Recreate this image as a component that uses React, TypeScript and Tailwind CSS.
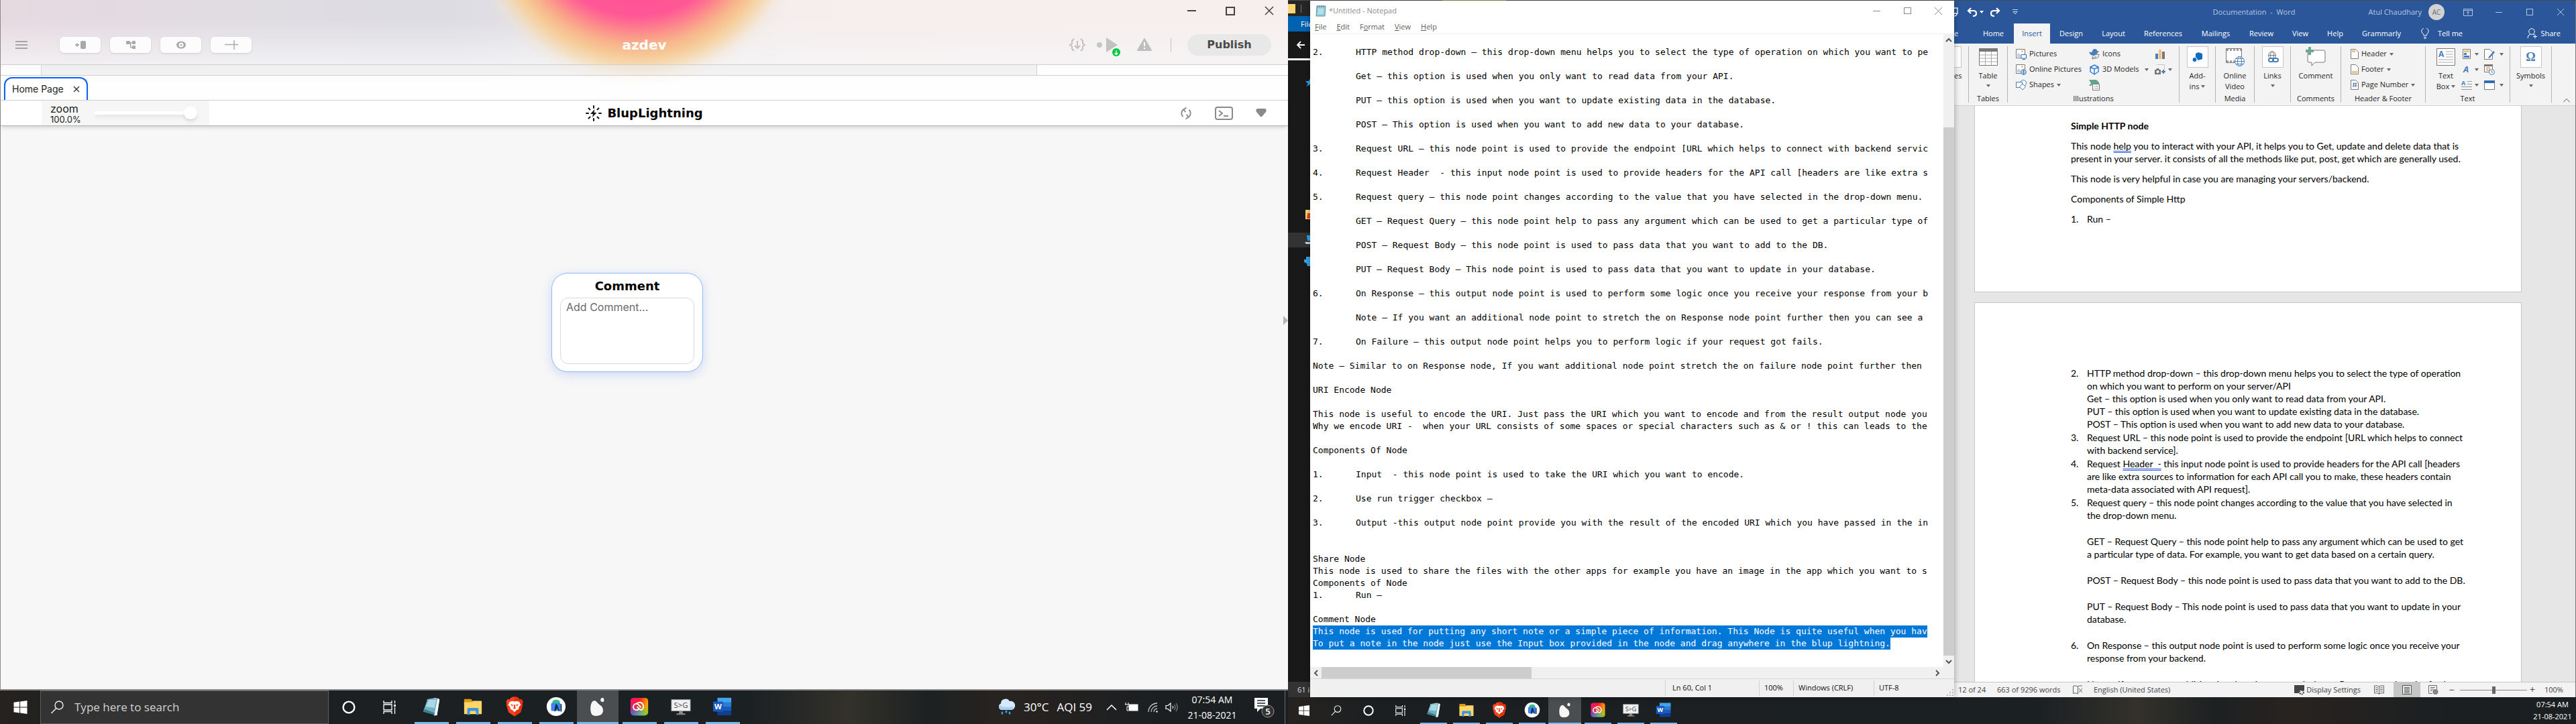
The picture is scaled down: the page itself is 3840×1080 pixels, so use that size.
import React from "react";

type Line = { n?: string; t?: string; indent?: boolean; selected?: boolean };

const notepadLines: Line[] = [
  {},
  { n: "2.", t: "HTTP method drop-down – this drop-down menu helps you to select the type of operation on which you want to pe" },
  {},
  { indent: true, t: "Get – this option is used when you only want to read data from your API." },
  {},
  { indent: true, t: "PUT – this option is used when you want to update existing data in the database." },
  {},
  { indent: true, t: "POST – This option is used when you want to add new data to your database." },
  {},
  { n: "3.", t: "Request URL – this node point is used to provide the endpoint [URL which helps to connect with backend servic" },
  {},
  { n: "4.", t: "Request Header  - this input node point is used to provide headers for the API call [headers are like extra s" },
  {},
  { n: "5.", t: "Request query – this node point changes according to the value that you have selected in the drop-down menu." },
  {},
  { indent: true, t: "GET – Request Query – this node point help to pass any argument which can be used to get a particular type of" },
  {},
  { indent: true, t: "POST – Request Body – this node point is used to pass data that you want to add to the DB." },
  {},
  { indent: true, t: "PUT – Request Body – This node point is used to pass data that you want to update in your database." },
  {},
  { n: "6.", t: "On Response – this output node point is used to perform some logic once you receive your response from your b" },
  {},
  { indent: true, t: "Note – If you want an additional node point to stretch the on Response node point further then you can see a" },
  {},
  { n: "7.", t: "On Failure – this output node point helps you to perform logic if your request got fails." },
  {},
  { t: "Note – Similar to on Response node, If you want additional node point stretch the on failure node point further then" },
  {},
  { t: "URI Encode Node" },
  {},
  { t: "This node is useful to encode the URI. Just pass the URI which you want to encode and from the result output node you" },
  { t: "Why we encode URI -  when your URL consists of some spaces or special characters such as & or ! this can leads to the" },
  {},
  { t: "Components Of Node" },
  {},
  { n: "1.", t: "Input  - this node point is used to take the URI which you want to encode." },
  {},
  { n: "2.", t: "Use run trigger checkbox –" },
  {},
  { n: "3.", t: "Output -this output node point provide you with the result of the encoded URI which you have passed in the in" },
  {},
  {},
  { t: "Share Node" },
  { t: "This node is used to share the files with the other apps for example you have an image in the app which you want to s" },
  { t: "Components of Node" },
  { n: "1.", t: "Run –" },
  {},
  { t: "Comment Node" },
  { selected: true, t: "This node is used for putting any short note or a simple piece of information. This Node is quite useful when you hav" },
  { selected: true, t: "To put a note in the node just use the Input box provided in the node and drag anywhere in the blup lightning." },
];

/* ---------- taskbar icons ---------- */

const WindowsLogo = ({ className }: { className: string }) => (
  <svg viewBox="0 0 20 20" className={className} fill="#fff" aria-hidden="true">
    <path d="M0 2.8 8.6 1.6v8H0zM9.6 1.4 20 0v9.6H9.6zM0 10.5h8.6v7.9L0 17.2zM9.6 10.5H20V20L9.6 18.6z" />
  </svg>
);
const SearchGlyph = ({ className }: { className: string }) => (
  <svg viewBox="0 0 20 20" className={className} fill="none" stroke="#f0f0f0" strokeWidth="1.4" aria-hidden="true">
    <circle cx="12.5" cy="7" r="6" />
    <path d="M8.3 11.4 1 19" />
  </svg>
);
const CortanaRing = ({ className }: { className: string }) => (
  <svg viewBox="0 0 20 20" className={className} fill="none" stroke="#fff" strokeWidth="2.4" aria-hidden="true">
    <circle cx="10" cy="10" r="8.4" />
  </svg>
);
const TaskViewGlyph = ({ className }: { className: string }) => (
  <svg viewBox="0 0 20 20" className={className} fill="none" stroke="#fff" strokeWidth="1.3" aria-hidden="true">
    <path d="M1 0v3.5h12V0M1 20v-3.5h12V20M1 6h12v8H1zM17.5 0v4.500M17.5 10v10" />
    <path d="M16 6h3v3h-3z" fill="#fff" stroke="none" />
  </svg>
);
const NotepadApp = () => (
  <svg viewBox="0 0 32 32" className="h-full w-full" aria-hidden="true">
    <path d="M9 5 22 2l7 2-4 25-4 2z" fill="#dfe9ec" />
    <path d="M10 4 26 3l-5 26-18-5z" fill="#6fb1c1" />
    <path d="M12 5h12l-3 13-14-2z" fill="#a9d8e2" />
    <path d="M3 24l18 5 1-3L5 20z" fill="#3e7f92" />
    <path d="M21 29 26 3l3 2-4 25z" fill="#f3f7f8" />
  </svg>
);
const ExplorerApp = () => (
  <svg viewBox="0 0 32 32" className="h-full w-full" aria-hidden="true">
    <path d="M2 5a1 1 0 0 1 1-1h10l2 3v5H2z" fill="#dc9c10" />
    <path d="M2 9h12l2-2h13a1 1 0 0 1 1 1v20H2z" fill="#ffd667" />
    <path d="M7 28v-8a2 2 0 0 1 2-2h14a2 2 0 0 1 2 2v9h-4v-4a2 2 0 0 0-2-2h-6a2 2 0 0 0-2 2v4H7z" fill="#3e97dc" />
  </svg>
);
const BraveApp = () => (
  <svg viewBox="0 0 32 32" className="h-full w-full" aria-hidden="true">
    <path d="m10 2 3-1.500h6L22 2l2 2.500 3-.3 2.500 4-1 3 .5 2-3.500 12.300L22 27.500 16 31.500l-6-4L6.500 25 3 13.200l.5-2-1-3L5 4.200l3 .3z" fill="#f8441c" />
    <path d="M16 1v30.500l6-4 3.500-2.500L29 13.200l-.5-2 1-3-2.500-4-3 .3L22 2l-3-1.500z" fill="#e8310a" />
    <path d="m16 8 3-.8 4.500 1 2.500 5-3.500 4 .5 2.600-4 2-3 3-3-3-4-2 .5-2.600-3.500-4 2.500-5 4.500-1z" fill="#fff" />
    <path d="m9.500 12 4 1-1 3zM22.500 12l-4 1 1 3zM14.500 13h3l-.5 4 1.500 1.500-2.500 1.500-2.500-1.500L15 17z" fill="#f8441c" />
  </svg>
);
const AndroidStudioApp = () => (
  <svg viewBox="0 0 32 32" className="h-full w-full" aria-hidden="true">
    <circle cx="16" cy="16" r="15" fill="#fff" />
    <path d="M10 9a6 4 0 0 1 12 0v2H10z" fill="#2fc47c" />
    <rect x="8" y="10" width="15" height="13" rx="2" fill="#3f84ee" />
    <path d="m15 13 2-1 5 12-2-1-2.500-5-2.500 5-2 1z" fill="#0b2640" />
    <path d="M23 12h1.800v12H23z" fill="#0b2640" />
  </svg>
);
const BlupApp = () => (
  <svg viewBox="0 0 32 32" className="h-full w-full" fill="#f6f6f6" stroke="#2a2a2a" strokeWidth=".8" aria-hidden="true">
    <path d="M11 6c3 0 5 5 10 8s7 15-4 17S4 27 4 19 7 6 11 6z" />
    <path d="M20 5c0-3 5-5 6-2s1 6-2 6-4-1-4-4z" />
  </svg>
);
const CreativeCloudApp = () => (
  <svg viewBox="0 0 32 32" className="h-full w-full" aria-hidden="true">
    <defs>
      <linearGradient id="cc-a" x1="0" y1="0" x2="1" y2="0.300">
        <stop offset="0" stopColor="#f0147d" />
        <stop offset=".5" stopColor="#f6202a" />
        <stop offset="1" stopColor="#ffae00" />
      </linearGradient>
      <linearGradient id="cc-b" x1="0" y1="0" x2="1" y2="0">
        <stop offset="0" stopColor="#3b62ff" />
        <stop offset=".5" stopColor="#27c7c0" />
        <stop offset="1" stopColor="#7bd11c" />
      </linearGradient>
      <linearGradient id="cc-c" x1="0" y1="0" x2="0" y2="1">
        <stop offset=".4" stopColor="#fff" stopOpacity="0" />
        <stop offset="1" stopColor="#fff" />
      </linearGradient>
      <mask id="cc-m"><rect width="32" height="32" fill="url(#cc-c)" /></mask>
    </defs>
    <rect x="2" y="2" width="28" height="28" rx="5" fill="url(#cc-a)" />
    <rect x="2" y="2" width="28" height="28" rx="5" fill="url(#cc-b)" mask="url(#cc-m)" />
    <g fill="none" stroke="#fff" strokeWidth="2">
      <path d="M16 19c-1.500 2-3 2.500-4.500 2.500a5 5 0 1 1 0-10c3 0 5 3.500 7 6" />
      <path d="M11 12a6.500 6.500 0 1 1 8.500 9.500c-3 0-5-3-7-5.500" />
    </g>
  </svg>
);
const ScreenToGifApp = () => (
  <svg viewBox="0 0 32 32" className="h-full w-full" aria-hidden="true">
    <path d="M13 22h6v5h4v2H9v-2h4z" fill="#8a8a8a" />
    <rect x="1" y="5" width="30" height="18" fill="#f1f1f1" stroke="#999" />
    <text x="16" y="18" textAnchor="middle" fontFamily="'Open Sans', sans-serif" fontSize="12" fill="#444">S&gt;G</text>
  </svg>
);
const WordApp = () => (
  <svg viewBox="0 0 32 32" className="h-full w-full" aria-hidden="true">
    <path d="M8 2h22v8H8z" fill="#41a5ee" />
    <path d="M8 9h22v7H8z" fill="#2b7cd3" />
    <path d="M8 16h22v7H8z" fill="#185abd" />
    <path d="M8 23h22v7H8z" fill="#103f91" />
    <rect x="1" y="8" width="16" height="16" rx="1" fill="#185abd" />
    <text x="9" y="20.500" textAnchor="middle" fontFamily="'Open Sans', sans-serif" fontWeight="700" fontSize="12" fill="#fff">W</text>
  </svg>
);

const apps = [
  { name: "Notepad", Icon: NotepadApp },
  { name: "File Explorer", Icon: ExplorerApp },
  { name: "Brave", Icon: BraveApp },
  { name: "Android Studio", Icon: AndroidStudioApp },
  { name: "Blup", Icon: BlupApp },
  { name: "Creative Cloud", Icon: CreativeCloudApp },
  { name: "ScreenToGif", Icon: ScreenToGifApp },
  { name: "Word", Icon: WordApp },
];

const taskbarBg =
  "bg-[linear-gradient(90deg,#26231f_0%,#1b1f22_7%,#1b2023_58%,#33312a_66%,#1d2122_72%,#28231f_78%,#1b1f22_90%)]";

/* ---------- Blup window ---------- */

const ToolButton = ({ label, children }: { label: string; children: React.ReactNode }) => (
  <button aria-label={label} className="flex h-6 w-[61px] items-center justify-center rounded-md bg-[#fcfcfc] shadow-sm">
    {children}
  </button>
);

const BlupHeader = () => (
  <header className="flex h-[96px] flex-col">
    <div className="flex h-[38px] shrink-0 items-center justify-end gap-[44px] pr-[21px] pb-[6px]">
      <button aria-label="Minimize" className="flex w-[14px] justify-center"><span className="h-0.5 w-[13px] bg-[#444]" /></button>
      <button aria-label="Maximize" className="h-[13px] w-[14px] border-2 border-[#444]" />
      <button aria-label="Close">
        <svg viewBox="0 0 14 14" className="h-[14px] w-[14px]" stroke="#444" strokeWidth="1.500"><path d="m1 1 12 12M13 1 1 13" /></svg>
      </button>
    </div>
    <div className="grid h-[58px] shrink-0 grid-cols-[1fr_auto_1fr] items-center">
      <div className="flex items-center pl-[22px]">
        <button aria-label="Menu" className="mr-12 flex w-[18px] flex-col gap-[3px]">
          <span className="h-0.5 bg-[#a6a6a6]" />
          <span className="h-0.5 bg-[#a6a6a6]" />
          <span className="h-0.5 bg-[#a6a6a6]" />
        </button>
        <div className="flex gap-[14px]">
          <ToolButton label="Insert panel">
            <svg viewBox="0 0 16 14" className="h-[14px] w-4" fill="#a9a9a9"><rect x="8" y="1" width="8" height="12" rx="2" /><path d="M0 6h2V4.500h2V6h2v2H4v1.500H2V8H0z" /></svg>
          </ToolButton>
          <ToolButton label="Tree">
            <svg viewBox="0 0 16 14" className="h-[14px] w-4" fill="#a9a9a9"><rect x="1" y="1" width="6" height="5" rx="1" /><rect x="10" y="1" width="5" height="5" rx="1" /><rect x="10" y="8" width="5" height="5" rx="1" /><path d="M6 3h2.500v7H11v1.500H7V4.500H6zM8 3h3v1.200H8z" /></svg>
          </ToolButton>
          <ToolButton label="Preview">
            <svg viewBox="0 0 16 12" className="h-3 w-4"><ellipse cx="8" cy="6" rx="7" ry="5.500" fill="#a9a9a9" /><ellipse cx="8" cy="6" rx="3.500" ry="3.500" fill="#fcfcfc" /><circle cx="8" cy="6" r="1.500" fill="#a9a9a9" /></svg>
          </ToolButton>
          <ToolButton label="Add">
            <svg viewBox="0 0 20 14" className="h-[14px] w-5" stroke="#a9a9a9" strokeWidth="1.500"><path d="M0 6.500h20M14 0v14" /></svg>
          </ToolButton>
        </div>
      </div>
      <h1 className="font-['DejaVu_Sans',sans-serif] text-xl leading-6 font-bold text-white">azdev</h1>
      <div className="flex items-center justify-end pr-[25px]">
        <button aria-label="Export code" className="mr-4">
          <svg viewBox="0 0 26 20" className="h-5 w-[26px]" fill="none" stroke="#c2c2c2" strokeWidth="2"><path d="M8 1 5 4v4l-3 2 3 2v4l3 3M18 1l3 3v4l3 2-3 2v4l-3 3M13 4v10M9 11l4 4 4-4" /></svg>
        </button>
        <button aria-label="Run" className="mr-6 h-[26px] w-9">
          <svg viewBox="0 0 36 30" className="h-[30px] w-9">
            <circle cx="4" cy="13" r="4" fill="#c6c6c6" /><path d="M14 2v22l17-11z" fill="#c2c2c2" />
            <circle cx="29" cy="24" r="6" fill="#00c840" /><path d="M29 21v6M26.500 25l2.500 2.500 2.500-2.500" stroke="#fff" strokeWidth="1.300" fill="none" />
          </svg>
        </button>
        <button aria-label="Warnings" className="mr-7">
          <svg viewBox="0 0 22 20" className="h-5 w-[22px]"><path d="M11 1 21 18H1z" fill="#bfbfbf" stroke="#bfbfbf" strokeWidth="2" strokeLinejoin="round" /><path d="M11 6v6M11 14v2" stroke="#fff" strokeWidth="2" /></svg>
        </button>
        <span className="mr-6 h-5 w-px bg-[#c4c4c4]" />
        <button className="h-8 w-[125px] rounded-2xl bg-[#e8e8e8] font-['DejaVu_Sans',sans-serif] text-base font-bold text-[#4a4a4a]">Publish</button>
      </div>
    </div>
  </header>
);

const CommentNode = () => (
  <section className="absolute top-[219px] left-[821px] w-[226px] rounded-3xl border border-[#8fb8ff] bg-white px-3 pt-2 pb-[11px] shadow-[0_4px_16px_rgba(110,150,230,0.300)]">
    <label htmlFor="node-comment" className="block text-center font-['DejaVu_Sans',sans-serif] text-lg leading-[22px] font-bold text-black">Comment</label>
    <textarea id="node-comment" placeholder="Add Comment..." className="mt-[6px] block h-[99px] w-full resize-none rounded-xl border border-[#d9d9d9] px-2 py-0.5 text-base leading-[22px] placeholder-[#6b6b6b] outline-none" />
  </section>
);

const BlupWindow = () => (
  <main className="flex min-h-0 flex-1 flex-col border-b-2 border-l border-[#8a8a8a] bg-[#f7f7f7] font-[Inter,sans-serif] text-[#222]">
    <div className="bg-[radial-gradient(circle_258px_at_949px_-127px,#ff4f9b_0%,#ff5695_58%,#fe7490_64%,#fb978a_70%,#f8b68c_76%,#f6cb98_82%,rgba(245,216,172,0.800)_88%,rgba(246,226,200,0.350)_94%,rgba(247,230,215,0)_100%),linear-gradient(180deg,rgba(253,253,253,0)_30px,rgba(245,245,246,0.800)_96px,#fdfdfd_125px),linear-gradient(90deg,#e6d9e0_0%,#dfdce2_20%,#dddce3_35%,#f5eeed_62%,#f7efee_100%)]">
      <BlupHeader />
      <div className="flex h-[17px] border-y border-[#cfcfcf]">
        <span className="w-[61px] border-r border-[#d5d5d5] bg-white/80" />
        <span className="flex-1 bg-[#ededed]/50" />
        <span className="w-[375px] border-l border-[#cfcfcf] bg-white/90" />
      </div>
      <nav className="flex h-[36px] items-end bg-white/60 pl-[5px]">
        <div className="flex h-[34px] w-[125px] items-center justify-between rounded-t-xl border-2 border-b-0 border-[#0a63f5] bg-white pr-[10px] pl-[10px] shadow-sm">
          <a href="#home" className="text-sm">Home Page</a>
          <button aria-label="Close Home Page">
            <svg viewBox="0 0 10 10" className="h-[10px] w-[10px]" stroke="#333" strokeWidth="1.400"><path d="m1 1 8 8M9 1 1 9" /></svg>
          </button>
        </div>
      </nav>
    </div>
    <div className="z-10 grid h-[39px] shrink-0 grid-cols-[1fr_auto_1fr] items-stretch border-t border-b border-t-[#cfcfcf] border-b-[#b5b5b5] bg-white shadow-md">
      <div className="flex pl-[61px]">
        <div className="flex w-[250px] items-center bg-[#f6f6f6] pl-[13px]">
          <label htmlFor="zoom" className="flex w-[65px] flex-col">
            <span className="text-base leading-[18px]">zoom</span>
            <span className="text-[13px] leading-[14px]">100.0%</span>
          </label>
          <input
            id="zoom"
            type="range"
            defaultValue={100}
            className="h-[5px] w-[154px] appearance-none rounded bg-white shadow-md [&::-webkit-slider-thumb]:h-[19px] [&::-webkit-slider-thumb]:w-5 [&::-webkit-slider-thumb]:appearance-none [&::-webkit-slider-thumb]:rounded-full [&::-webkit-slider-thumb]:bg-white [&::-webkit-slider-thumb]:shadow-md"
          />
        </div>
      </div>
      <div className="flex items-center gap-2">
        <svg viewBox="0 0 24 24" className="h-6 w-6" aria-hidden="true">
          <path d="M13.500 6 7 13h4l-1 5 6.500-7H12.500z" fill="#111" />
          <path d="M12 1v3M12 20v3M1 12h3M20 12h3M4.500 4.500l2 2M17.500 17.500l2 2M4.500 19.500l2-2M17.500 6.500l2-2" stroke="#111" strokeWidth="2" strokeLinecap="round" />
        </svg>
        <h2 className="font-['DejaVu_Sans',sans-serif] text-lg leading-6 font-bold text-black">BlupLightning</h2>
      </div>
      <div className="flex items-center justify-end pr-8">
        <button aria-label="Sync" className="mr-[34px]">
          <svg viewBox="0 0 18 18" className="h-[18px] w-[18px]" fill="none" stroke="#8a8a8a" strokeWidth="1.800"><path d="M5.500 3.200A6.800 6.800 0 0 0 4.500 14M12.500 14.800A6.800 6.800 0 0 0 13.500 4" /><path d="m9.500.5-4 2.700 2.700 4M8.500 17.500l4-2.700-2.700-4" /></svg>
        </button>
        <button aria-label="Terminal" className="mr-[34px]">
          <svg viewBox="0 0 27 20" className="h-5 w-[27px]" fill="none" stroke="#8a8a8a" strokeWidth="2"><rect x="1" y="1" width="25" height="18" rx="3" /><path d="m6 6 5 4-5 4M13 14h7" /></svg>
        </button>
        <button aria-label="More">
          <svg viewBox="0 0 16 13" className="h-[13px] w-4" fill="#8a8a8a"><path d="M3 0h10c3 0 3 3 2 5L9.500 11.500q-1.500 1.500-3 0L1 5C0 3 0 0 3 0z" /></svg>
        </button>
      </div>
    </div>
    <div className="relative flex min-h-0 flex-1 items-center justify-end overflow-hidden">
      <CommentNode />
      <svg viewBox="0 0 8 14" className="mt-[-260px] h-[14px] w-2" fill="#b5b5b5" aria-hidden="true"><path d="M1 0v14l7-7z" /></svg>
    </div>
  </main>
);

const LeftTaskbar = () => (
  <footer className={`flex h-[50px] shrink-0 items-stretch text-white ${taskbarBg}`}>
    <button aria-label="Start" className="flex w-[60px] items-center justify-center"><WindowsLogo className="h-5 w-[21px]" /></button>
    <label className="flex w-[430px] items-center gap-[15px] border border-[#5d5d5d] bg-[#333] pl-[14px]">
      <SearchGlyph className="h-5 w-[21px]" />
      <input aria-label="Search" placeholder="Type here to search" className="w-[360px] bg-transparent text-[17px] text-[#ddd] placeholder-[#d2d2d2] outline-none" />
    </label>
    <button aria-label="Cortana" className="flex w-[60px] items-center justify-center"><CortanaRing className="h-5 w-5" /></button>
    <button aria-label="Task View" className="flex w-[62px] items-center justify-center"><TaskViewGlyph className="h-5 w-5" /></button>
    {apps.map(({ name, Icon }) => (
      <button key={name} aria-label={name} className={`flex w-[62px] flex-col items-center ${name === "Blup" ? "bg-[#4a4e51]" : ""}`}>
        <span className="flex flex-1 items-center"><span className="h-[30px] w-[30px]"><Icon /></span></span>
        <span className={`h-[3px] bg-[#76b9ed] ${name === "Blup" ? "w-full" : "w-[51px]"}`} />
      </button>
    ))}
    <div className="flex flex-1 items-center justify-end">
      <svg viewBox="0 0 28 26" className="mr-3 h-[26px] w-7" aria-hidden="true">
        <path d="M7 17a5 5 0 0 1-1-9.500A7 7 0 0 1 19 4a6 6 0 0 1 3 13z" fill="#d5e9fa" />
        <path d="M7 17a5 5 0 0 1-3-8c4 6 14 3 21 3a6 6 0 0 1-3 5z" fill="#a9d0f2" />
        <path d="M8 19q3 3 0 5-3-2 0-5zM14 17q3 3 0 5-3-2 0-5zM19 19q3 3 0 5-3-2 0-5z" fill="#35a2ee" />
      </svg>
      <span className="mr-3 text-[17px]">30°C</span>
      <span className="mr-[21px] text-[17px]">AQI 59</span>
      <svg viewBox="0 0 16 9" className="mr-3 h-[9px] w-4" fill="none" stroke="#fff" strokeWidth="1.500"><path d="m1 8 7-7 7 7" /></svg>
      <svg viewBox="0 0 20 14" className="mr-[14px] h-[14px] w-5"><rect x="6" y="3" width="13" height="9" fill="#fff" stroke="#fff" /><path d="M1 0v3M5 0v3M0 3h6v3H3v6h2" stroke="#fff" fill="#222" /></svg>
      <svg viewBox="0 0 16 15" className="mr-[10px] h-[15px] w-4" fill="none" stroke="#c8c8c8" strokeWidth="1.300"><path d="M1 14A13 13 0 0 1 14 1M5 14a9 9 0 0 1 9-9M9 14a5 5 0 0 1 5-5" /><circle cx="13.500" cy="13.500" r="1.200" fill="#fff" stroke="none" /></svg>
      <svg viewBox="0 0 20 16" className="mr-3 h-4 w-5" fill="none" stroke="#fff" strokeWidth="1.200"><path d="M1 5.500h3L8 2v12l-4-3.500H1z" /><path d="M11 6q1.500 2 0 4" /><path d="M13.500 4q3 4 0 8M16 2q4.500 6 0 12" stroke="#888" /></svg>
      <div className="mr-6 w-[76px] text-center text-sm leading-[23px]">
        <div>07:54 AM</div>
        <div>21-08-2021</div>
      </div>
      <svg viewBox="0 0 32 32" className="mr-[14px] h-8 w-8" aria-hidden="true">
        <path d="M1 2h20v16H10l-5 5v-5H1z" fill="#fff" /><path d="M5 6h12M5 10h12M5 14h12" stroke="#222" strokeWidth="1.300" />
        <circle cx="21" cy="22" r="9" fill="#333" stroke="#999" />
        <text x="21" y="27" textAnchor="middle" fontFamily="'Open Sans', sans-serif" fontWeight="600" fontSize="13" fill="#fff">5</text>
      </svg>
      <span className="mr-1 h-full w-px bg-[#6a6d70]" />
    </div>
  </footer>
);

/* ---------- Explorer edge ---------- */

const ExplorerEdge = () => (
  <aside className="flex w-[33px] shrink-0 flex-col overflow-hidden bg-[#191919] text-white">
    <div className="flex h-[23px] items-center gap-2 bg-[#262626]">
      <span className="h-[14px] w-[11px] bg-[#f7d774]" />
      <span className="h-3 w-px bg-[#777]" />
    </div>
    <div className="h-[23px] overflow-hidden bg-[#0063b1] pl-[19px] text-[11px] leading-[23px] whitespace-nowrap">File</div>
    <div className="flex h-[43px] items-center justify-end border-b-[3px] border-white pr-2">
      <svg viewBox="0 0 12 12" className="h-3 w-3" fill="none" stroke="#fff" strokeWidth="1.800"><path d="M12 6H1M6 1 1 6l5 5" /></svg>
    </div>
    <div className="flex flex-1 flex-col items-end pt-[27px]">
      <svg viewBox="0 0 8 12" className="h-3 w-2" fill="#2ea4f0"><path d="m8 0-2 4-5 0 4 4-3 4 6-3z" /></svg>
      <svg viewBox="0 0 7 14" className="mt-[184px] h-[14px] w-[7px]"><path d="M0 0h7v14H0z" fill="#f8d775" /><path d="M3 5h4v8H2z" fill="#e0442c" /></svg>
      <div className="mt-[20px] flex h-[22px] w-full items-center justify-end bg-[#333]">
        <svg viewBox="0 0 8 14" className="h-[14px] w-2"><path d="M3 0h5v8H4z" fill="#2ea4f0" /><path d="M0 10h8v3H2z" fill="#cfd6da" /></svg>
      </div>
      <svg viewBox="0 0 9 14" className="mt-[14px] h-[14px] w-[9px]" fill="#35a2e6"><path d="M3 0h6v14H5L4 10 0 8V4h3z" /></svg>
    </div>
    <div className="h-[23px] overflow-hidden bg-[#333] pl-[14px] text-[11px] leading-[23px] whitespace-nowrap text-[#ddd]">61 i</div>
  </aside>
);

/* ---------- Notepad ---------- */

const Chevron = ({ d }: { d: string }) => (
  <svg viewBox="0 0 10 10" className="h-[10px] w-[10px]" fill="none" stroke="#555" strokeWidth="2" aria-hidden="true"><path d={d} /></svg>
);

const NotepadWindow = () => (
  <section className="z-10 flex w-[960px] shrink-0 flex-col bg-white shadow-[0_0_8px_rgba(0,0,0,0.350)]">
    <div className="flex h-[30px] items-center pr-[18px] pl-2">
      <svg viewBox="0 0 16 18" className="mr-1 h-[18px] w-4" aria-hidden="true"><path d="M2 2h13l-1 15H1z" fill="#8fd0dc" stroke="#6d8f96" /><path d="M3 1v3M6 1v3M9 1v3M12 1v3" stroke="#777" /><path d="M4 7h8M4 9h8M4 11h8M3 13h8" stroke="#d9f2f5" /></svg>
      <h2 className="flex-1 text-[11px] text-[#8c8c8c]">*Untitled - Notepad</h2>
      <div className="flex items-center gap-[35px]">
        <button aria-label="Minimize" className="h-px w-[11px] bg-[#888]" />
        <button aria-label="Maximize" className="h-[10px] w-[11px] border border-[#888]" />
        <button aria-label="Close"><svg viewBox="0 0 11 11" className="h-[11px] w-[11px]" stroke="#888"><path d="m0 0 11 11M11 0 0 11" /></svg></button>
      </div>
    </div>
    <nav className="flex h-5 items-center gap-[15px] border-b border-[#f0f0f0] pl-[7px] text-[11px] text-[#5f5f5f]">
      <button><u>F</u>ile</button>
      <button><u>E</u>dit</button>
      <button>F<u>o</u>rmat</button>
      <button><u>V</u>iew</button>
      <button><u>H</u>elp</button>
    </nav>
    <div className="flex min-h-0 flex-1">
      <div
        role="textbox"
        aria-label="Text editor"
        aria-multiline="true"
        contentEditable
        suppressContentEditableWarning
        className="min-w-0 flex-1 overflow-hidden pr-1 pl-1 font-['DejaVu_Sans_Mono',monospace] text-[13px] leading-[18px] whitespace-pre text-black outline-none"
      >
        {notepadLines.map((l, i) => (
          <div key={i} className="flex h-[18px] overflow-hidden">
            {(l.n || l.indent) && <span className="w-16 shrink-0">{l.n}</span>}
            <span className={l.selected ? "bg-[#0078d7] text-white" : ""}>{l.t}</span>
          </div>
        ))}
      </div>
      <div className="flex w-4 shrink-0 flex-col items-center bg-[#f0f0f0]">
        <span className="flex h-[17px] items-center"><Chevron d="m1 7 4-4 4 4" /></span>
        <span className="mt-[122px] w-full flex-1 bg-[#cdcdcd]" />
        <span className="flex h-[17px] items-center"><Chevron d="m1 3 4 4 4-4" /></span>
      </div>
    </div>
    <div className="flex h-[17px] items-center justify-between bg-[#f0f0f0] pr-5 pl-1">
      <div className="flex h-full flex-1 items-center gap-[3px]">
        <Chevron d="M7 1 3 5l4 4" />
        <span className="h-full w-[313px] bg-[#cdcdcd]" />
      </div>
      <Chevron d="m3 1 4 4-4 4" />
    </div>
    <div className="flex h-7 items-center justify-end border-t border-[#d7d7d7] bg-[#f0f0f0] py-0.5 text-[11px] text-[#111]">
      <span className="flex h-full w-[140px] items-center border-l border-[#d0d0d0] pl-[10px]">Ln 60, Col 1</span>
      <span className="flex h-full w-[51px] items-center border-l border-[#d0d0d0] pl-[7px]">100%</span>
      <span className="flex h-full w-[120px] items-center border-l border-[#d0d0d0] pl-[7px]">Windows (CRLF)</span>
      <span className="flex h-full w-[120px] items-center justify-between border-l border-[#d0d0d0] pl-[7px]">
        UTF-8
        <svg viewBox="0 0 10 10" className="mr-px h-[10px] w-[10px] self-end" fill="#b5b5b5" aria-hidden="true"><path d="M0 8h2v2H0zM4 8h2v2H4zM8 8h2v2H8zM4 4h2v2H4zM8 4h2v2H8zM8 0h2v2H8z" /></svg>
      </span>
    </div>
  </section>
);

/* ---------- Word ---------- */

const Caret = () => (
  <svg viewBox="0 0 6 4" className="h-1 w-[6px]" fill="#666" aria-hidden="true"><path d="M0 0h6L3 4z" /></svg>
);

const PicIcon = ({ web }: { web?: boolean }) => (
  <svg viewBox="0 0 16 16" className="h-4 w-4" fill="none" aria-hidden="true">
    <path d="M.5.5h13v13H.5z" fill="#fff" stroke="#7a7a7a" />
    <circle cx="9.500" cy="3.500" r="1.500" fill="#eac282" />
    <path d="M2 12V8l2-2 3 3v3z" fill="#c0d2e6" />
    {web ? (
      <g stroke="#4a7ebb"><circle cx="11.500" cy="11.500" r="4" fill="#fff" /><path d="M7.500 11.500h8M11.500 7.500v8M9 9q2.500 1 5 0M9 14q2.500-1 5 0" /></g>
    ) : (
      <path d="M8 8.500h7.500V14H8zM10 15.500h4" fill="#fff" stroke="#2f6cb3" />
    )}
  </svg>
);
const ShapesIcon = () => (
  <svg viewBox="0 0 16 16" className="h-4 w-4" fill="#fff" stroke="#4a7ebb" aria-hidden="true"><circle cx="11" cy="5" r="4.500" /><path d="M.5 3.500h9v8h-9z" /><path d="m10 6 4.500 4.500L10 15l-4.500-4.500z" /></svg>
);
const IconsIcon = () => (
  <svg viewBox="0 0 16 16" className="h-4 w-4" aria-hidden="true"><path d="M0 4q3 2 5 0 0-4 4-4 3 0 3 3l3 0-3 4q-4 4-9 2Q1 8 0 4z" fill="#4a7ebb" /><path d="M5 15q-1-7 10-7 0 7-8 6zM5 15l6-4" fill="#f3f3f3" stroke="#777" /></svg>
);
const CubeIcon = () => (
  <svg viewBox="0 0 16 16" className="h-4 w-4" fill="none" stroke="#2b7cd3" strokeWidth="1.400" aria-hidden="true"><path d="m8 1 6 3v7l-6 4-6-4V4zM2 4l6 3 6-3M8 7v8" /></svg>
);
const SmartArtIcon = () => (
  <svg viewBox="0 0 16 16" className="h-4 w-4" aria-hidden="true"><path d="M0 0h11l4 4v2H6L3 9H0l3-4z" fill="#64a38c" /><path d="M5.500 6.500h10v9h-10z" fill="#fff" stroke="#777" /><path d="M7 9.500h1M9 9.500h5M7 12.500h1M9 12.500h5" stroke="#999" /></svg>
);
const ChartIcon = () => (
  <svg viewBox="0 0 16 16" className="h-4 w-4" aria-hidden="true"><path d="M1 7h4v8H1z" fill="#4a7ebb" /><path d="M6 1h4v14H6z" fill="#eac282" /><path d="M11 4h4v11h-4z" fill="#777" /></svg>
);
const ScreenshotIcon = () => (
  <svg viewBox="0 0 16 16" className="h-4 w-4" aria-hidden="true"><path d="M3.500.5h11v9" fill="none" stroke="#999" strokeDasharray="1 1" /><path d="M0 8h2l1-2h3l1 2h2v7H0z" fill="#777" /><circle cx="4.500" cy="11" r="2" fill="#fff" /><path d="M10 11h6M13 8v6" stroke="#4a7ebb" strokeWidth="2" /></svg>
);
const DocIcon = ({ kind }: { kind: "header" | "footer" | "number" }) => (
  <svg viewBox="0 0 12 15" className="h-[15px] w-3" aria-hidden="true">
    <path d="M.5.5h7l4 4v10H.5z" fill="#fff" stroke="#7a7a7a" />
    {kind === "header" && <path d="M2 2h5v3H2z" fill="#eac282" />}
    {kind === "footer" && <path d="M2 10h8v3H2z" fill="#eac282" />}
    {kind === "number" && <path d="M5 4 4 11M8 4 7 11M3 6h7M3 9h7" stroke="#4a7ebb" />}
  </svg>
);

const Group = ({ width, label, children }: { width: string; label: string; children: React.ReactNode }) => (
  <div className={`${width} flex h-[84px] shrink-0 flex-col border-r border-[#b5b5b5]`}>
    <div className="flex-1">{children}</div>
    <div className="h-[13px] text-center leading-[13px]">{label}</div>
  </div>
);

const BigButton = ({ boxed, icon, lines, caret }: { boxed?: boolean; icon: React.ReactNode; lines: string[]; caret?: "inline" | "below" }) => (
  <button className="flex w-full flex-col items-center">
    <span className={`mb-1 flex h-8 w-8 items-center justify-center ${boxed ? "border border-[#c6c6c6] bg-white" : ""}`}>{icon}</span>
    {lines.map((t, i) => (
      <span key={t} className="flex h-4 items-center gap-[3px] leading-4">
        {t}
        {caret === "inline" && i === lines.length - 1 && <Caret />}
      </span>
    ))}
    {caret === "below" && <span className="flex h-[14px] items-center"><Caret /></span>}
  </button>
);

const SmallButton = ({ icon, label, caret, gap }: { icon: React.ReactNode; label?: string; caret?: boolean; gap?: string }) => (
  <button aria-label={label ?? "Tool"} className="flex h-[23px] items-center gap-1 whitespace-nowrap">
    {icon}
    {label && <span>{label}</span>}
    {caret && <span className={gap ?? ""}><Caret /></span>}
  </button>
);

const tabs = [
  { t: "Home", w: "w-[61px]" },
  { t: "Insert", w: "w-[54px]" },
  { t: "Design", w: "w-[63px]" },
  { t: "Layout", w: "w-[63px]" },
  { t: "References", w: "w-[85px]" },
  { t: "Mailings", w: "w-[72px]" },
  { t: "Review", w: "w-[64px]" },
  { t: "View", w: "w-[52px]" },
  { t: "Help", w: "w-[52px]" },
  { t: "Grammarly", w: "w-[86px]" },
];

const Flagged = ({ children }: { children: React.ReactNode }) => (
  <span className="underline decoration-[#2a5bd7] decoration-double underline-offset-2">{children}</span>
);

const Ribbon = () => (
  <div className="flex h-[93px] shrink-0 items-start border-b border-[#d2d2d2] bg-[#f3f3f3] pt-1 text-[11px] text-[#262626]">
    <div className="flex h-[84px] w-[22px] shrink-0 flex-col border-r border-[#b5b5b5]">
      <span className="h-8 w-[11px] border border-l-0 border-[#c6c6c6] bg-white" />
      <span className="mt-1 leading-4">es</span>
    </div>
    <Group width="w-[58px]" label="Tables">
      <BigButton
        lines={["Table"]}
        caret="below"
        icon={<svg viewBox="0 0 28 26" className="h-[26px] w-7"><path d="M.5.500h27v25H.5z" fill="#fff" stroke="#777" /><path d="M0 0h28v5H0z" fill="#777" /><path d="M1 10h26M1 15h26M1 20h26M9.500 5v20M18.500 5v20" stroke="#aaa" /></svg>}
      />
    </Group>
    <Group width="w-[256px]" label="Illustrations">
      <div className="flex pl-3">
        <div className="flex w-[109px] flex-col">
          <SmallButton icon={<PicIcon />} label="Pictures" />
          <SmallButton icon={<PicIcon web />} label="Online Pictures" />
          <SmallButton icon={<ShapesIcon />} label="Shapes" caret />
        </div>
        <div className="flex w-[98px] flex-col">
          <SmallButton icon={<IconsIcon />} label="Icons" />
          <SmallButton icon={<CubeIcon />} label="3D Models" caret gap="pl-1" />
          <SmallButton icon={<SmartArtIcon />} />
        </div>
        <div className="flex flex-col">
          <SmallButton icon={<ChartIcon />} />
          <SmallButton icon={<ScreenshotIcon />} caret />
        </div>
      </div>
    </Group>
    <Group width="w-[54px]" label="">
      <BigButton boxed lines={["Add-", "ins"]} caret="inline" icon={<svg viewBox="0 0 16 16" className="h-4 w-4" fill="#0f6cc0"><path d="m9 1 6 2v8l-6 2-4-4V3z" /><circle cx="3.500" cy="12" r="3.500" stroke="#fff" /></svg>} />
    </Group>
    <Group width="w-[58px]" label="Media">
      <BigButton lines={["Online", "Video"]} icon={<svg viewBox="0 0 28 28" className="h-7 w-7" fill="none"><path d="M.500 1.500h23v21H.500z" fill="#fff" stroke="#777" /><path d="M1 3.500h22M1 20.500h12" stroke="#777" strokeWidth="2" strokeDasharray="3 2" /><g stroke="#4a7ebb"><circle cx="20.500" cy="20.500" r="7" fill="#fff" /><ellipse cx="20.500" cy="20.500" rx="3" ry="7" /><path d="M13.500 20.500h14M15 16.500h11M15 24.500h11" /></g></svg>} />
    </Group>
    <Group width="w-[54px]" label="">
      <BigButton boxed lines={["Links"]} caret="below" icon={<svg viewBox="0 0 18 18" className="h-[18px] w-[18px]" fill="none"><g stroke="#777"><circle cx="8" cy="6.500" r="5.500" /><ellipse cx="8" cy="6.500" rx="2.500" ry="5.500" /><path d="M2.500 6.500h11" /></g><g stroke="#4a7ebb" strokeWidth="2"><rect x="3" y="11" width="7" height="5" rx="2.500" fill="#fff" /><rect x="9" y="11" width="8" height="5" rx="2.500" /></g></svg>} />
    </Group>
    <Group width="w-[75px]" label="Comments">
      <BigButton lines={["Comment"]} icon={<svg viewBox="0 0 30 30" className="h-[30px] w-[30px]"><path d="M3 7q0-2 2-2h22q2 0 2 2v14q0 2-2 2H14l-5 5v-5H5q-2 0-2-2z" fill="#fff" stroke="#777" /><path d="M4 0h4v4h4v4H8v4H4V8H0V4h4z" fill="#6fa793" /></svg>} />
    </Group>
    <Group width="w-[126px]" label="Header & Footer">
      <div className="flex flex-col pl-[14px]">
        <SmallButton icon={<DocIcon kind="header" />} label="Header" caret />
        <SmallButton icon={<DocIcon kind="footer" />} label="Footer" caret />
        <SmallButton icon={<DocIcon kind="number" />} label="Page Number" caret />
      </div>
    </Group>
    <Group width="w-[126px]" label="Text">
      <div className="flex">
        <div className="w-[52px] pl-2">
          <BigButton lines={["Text", "Box"]} caret="inline" icon={<svg viewBox="0 0 28 26" className="h-[26px] w-7"><path d="M.500.500h27v25H.500z" fill="#fff" stroke="#777" /><path d="M14 5h11M14 9h11M14 13h11M3 17h22M3 21h22" stroke="#aaa" /><text x="3" y="13" fontFamily="'Open Sans', sans-serif" fontWeight="700" fontSize="12" fill="#4a7ebb">A</text></svg>} />
        </div>
        <div className="flex w-[35px] flex-col pl-px">
          <SmallButton caret icon={<svg viewBox="0 0 16 16" className="h-4 w-4"><path d="M2.500.500h11v14H2.500z" fill="#fff" stroke="#777" /><path d="M4 2h8v3H4z" fill="#eac282" /><path d="M4 6h4v3H4zM4 10h8v3H4z" fill="#4a7ebb" /></svg>} />
          <SmallButton caret icon={<svg viewBox="0 0 16 16" className="h-4 w-4 overflow-visible"><text x="3" y="12" fontFamily="'Open Sans', sans-serif" fontStyle="italic" fontWeight="700" fontSize="13" fill="#4a7ebb">A</text></svg>} />
          <SmallButton caret icon={<svg viewBox="0 0 16 16" className="h-4 w-4 overflow-visible"><path d="M9 2.500h7M9 6.500h7M0 10.500h16M0 14.500h16" stroke="#999" /><text x="0" y="8" fontFamily="'Open Sans', sans-serif" fontWeight="700" fontSize="9" fill="#4a7ebb">A</text></svg>} />
        </div>
        <div className="flex flex-col">
          <SmallButton caret gap="pl-[3px]" icon={<svg viewBox="0 0 16 16" className="h-4 w-4"><path d="M.500.500h8l4 4v11H.500z" fill="#fff" stroke="#777" /><path d="m6 13 8-10 2 2-8 9z" fill="#4a7ebb" /></svg>} />
          <SmallButton icon={<svg viewBox="0 0 16 16" className="h-4 w-4"><path d="M.500.500h12v11H.500z" fill="#fff" stroke="#777" /><path d="M0 0h13v3H0z" fill="#777" /><path d="M4 5h4v4H4z" fill="#fff" stroke="#d9772b" /><circle cx="11.500" cy="11.500" r="4" fill="#fff" stroke="#4a7ebb" /><path d="M11.500 9v3h2" stroke="#4a7ebb" fill="none" /></svg>} />
          <SmallButton caret gap="pl-[3px]" icon={<svg viewBox="0 0 16 14" className="h-[14px] w-4"><path d="M.500.500h15v13H.500z" fill="#fff" stroke="#777" /><path d="M0 0h16v4H0z" fill="#2f6cb3" /></svg>} />
        </div>
      </div>
    </Group>
    <Group width="w-[62px]" label="">
      <BigButton boxed lines={["Symbols"]} caret="below" icon={<span className="font-['Liberation_Serif',serif] text-lg leading-5 font-bold text-[#4a7ebb]">Ω</span>} />
    </Group>
    <div className="flex h-[84px] flex-1 items-end justify-end pr-2">
      <button aria-label="Collapse ribbon"><svg viewBox="0 0 10 6" className="h-[6px] w-[10px]" fill="none" stroke="#555"><path d="m0 5.500 5-5 5 5" /></svg></button>
    </div>
  </div>
);

const page = "border border-[#c6c6c6] bg-white pl-[143px] text-sm leading-[19px] whitespace-nowrap text-black";

const Item = ({ n, lines }: { n?: string; lines: React.ReactNode[] }) => (
  <div className="flex">
    <span className="w-6 shrink-0">{n}</span>
    <div className="whitespace-pre">
      {lines.map((line, i) => (
        <p key={i} className="h-[19px]">{line}</p>
      ))}
    </div>
  </div>
);

const WordDocument = () => (
  <div className="flex min-h-0 flex-1 flex-col gap-[15px] overflow-hidden bg-[#e6e6e6] pr-[80px] pl-[30px] font-[Lato,sans-serif]">
    <article className={`${page} flex h-[278px] shrink-0 flex-col gap-[11px] border-t-0 pt-5`}>
      <h3 className="font-bold">Simple HTTP node</h3>
      <div>
        <p>This node <Flagged>help</Flagged> you to interact with your API, it helps you to Get, update and delete data that is</p>
        <p>present in your server. it consists of all the methods like put, post, get which are generally used.</p>
      </div>
      <p>This node is very helpful in case you are managing your servers/backend.</p>
      <p>Components of Simple Http</p>
      <Item n="1." lines={["Run –"]} />
    </article>
    <article className={`${page} flex shrink-0 flex-col gap-px pt-[95px] pb-10`}>
      <Item
        n="2."
        lines={[
          "HTTP method drop-down – this drop-down menu helps you to select the type of operation",
          "on which you want to perform on your server/API",
          "Get – this option is used when you only want to read data from your API.",
          "PUT – this option is used when you want to update existing data in the database.",
          "POST – This option is used when you want to add new data to your database.",
        ]}
      />
      <Item n="3." lines={["Request URL – this node point is used to provide the endpoint [URL which helps to connect", "with backend service]."]} />
      <Item
        n="4."
        lines={[
          <>Request <Flagged>{"Header  -"}</Flagged> this input node point is used to provide headers for the API call [headers</>,
          "are like extra sources to information for each API call you to make, these headers contain",
          "meta-data associated with API request].",
        ]}
      />
      <Item n="5." lines={["Request query – this node point changes according to the value that you have selected in", "the drop-down menu.", ""]} />
      <Item lines={["GET – Request Query – this node point help to pass any argument which can be used to get", "a particular type of data. For example, you want to get data based on a certain query.", ""]} />
      <Item lines={["POST – Request Body – this node point is used to pass data that you want to add to the DB.", ""]} />
      <Item lines={["PUT – Request Body – This node point is used to pass data that you want to update in your", "database.", ""]} />
      <Item n="6." lines={["On Response – this output node point is used to perform some logic once you receive your", "response from your backend.", ""]} />
      <Item lines={["Note – If you want an additional node point to stretch the on Response node point further"]} />
    </article>
  </div>
);

const WordWindow = () => (
  <section className="flex min-w-0 flex-1 flex-col border-r border-[#777] bg-[#e6e6e6]">
    <header className="shrink-0 bg-[#2b579a] text-white">
      <div className="grid h-[34px] grid-cols-[1fr_auto_1fr] items-center text-[11px] text-[#b3c6e2]">
        <div className="flex items-center">
          <svg viewBox="0 0 6 14" className="mr-[13px] h-[14px] w-[6px]" fill="none" stroke="#fff" strokeWidth="1.300"><path d="M0 1h5v8H0M4 9q0 4-4 4" /></svg>
          <button aria-label="Undo"><svg viewBox="0 0 15 14" className="h-[14px] w-[15px]" fill="none" stroke="#fff" strokeWidth="2.200"><path d="M6 1 2 5l4 4M2 5h8q4 0 4 4t-5 4" /></svg></button>
          <svg viewBox="0 0 6 4" className="ml-1 h-1 w-[6px]" fill="#fff"><path d="M0 0h6L3 4z" /></svg>
          <button aria-label="Redo" className="ml-[10px]"><svg viewBox="0 0 15 14" className="h-[14px] w-[15px]" fill="none" stroke="#fff" strokeWidth="2.200"><path d="m9 1 4 4-4 4M13 5H5Q1 5 1 9t5 4" /></svg></button>
          <svg viewBox="0 0 8 8" className="ml-[18px] h-2 w-2" fill="none" stroke="#c7d5ea"><path d="M0 .5h8M1 3.500h6L4 7z" /></svg>
        </div>
        <h2 className="pr-[32px] whitespace-pre">Documentation  -  Word</h2>
        <div className="flex items-center justify-end pr-[17px]">
          <span>Atul Chaudhary</span>
          <span className="ml-[10px] flex h-6 w-6 items-center justify-center rounded-full bg-[#d2d2d2] text-[10px] text-[#6a6a6a]">AC</span>
          <svg viewBox="0 0 14 11" className="ml-[28px] h-[11px] w-[14px]" fill="none" stroke="#b3c6e2"><path d="M.5.5h13v10H.5zM0 2.500h14M7 9V4M5 6l2-2 2 2" /></svg>
          <button aria-label="Minimize" className="ml-[34px] h-px w-[10px] bg-[#b3c6e2]" />
          <button aria-label="Maximize" className="ml-[36px] h-[10px] w-[10px] border border-[#b3c6e2]" />
          <button aria-label="Close" className="ml-[36px]"><svg viewBox="0 0 10 10" className="h-[10px] w-[10px]" stroke="#b3c6e2"><path d="m0 0 10 10M10 0 0 10" /></svg></button>
        </div>
      </div>
      <nav className="flex h-[30px] items-stretch text-[11px]">
        <span className="flex w-7 items-center">e</span>
        {tabs.map(({ t, w }) => (
          <button key={t} className={`${w} ${t === "Insert" ? "bg-[#f3f3f3] text-[#2b579a]" : ""}`}>{t}</button>
        ))}
        <span className="flex items-center pl-4">
          <svg viewBox="0 0 12 16" className="mr-[13px] h-4 w-3" fill="none" stroke="#fff"><path d="M4 11q0-2-2-3.500A5 5 0 1 1 10 7.500Q8 9 8 11zM4 13.500h4M4.500 15.500h3" /></svg>
          Tell me
        </span>
        <button className="ml-auto flex items-center gap-1 pr-[22px]">
          <svg viewBox="0 0 16 16" className="h-4 w-4" fill="none" stroke="#fff"><circle cx="7" cy="5" r="4.300" /><path d="M1 15q0-5 4-6M9 9l2 1M9 12.500h6M12 9.500v6" /></svg>
          Share
        </button>
      </nav>
    </header>
    <Ribbon />
    <WordDocument />
    <div className="z-0 flex h-[23px] shrink-0 items-center border-t border-[#c6c6c6] bg-[#f3f3f3] pl-[6px] text-[11px] whitespace-nowrap text-[#444]">
      <span className="w-[58px]">12 of 24</span>
      <span className="w-[113px]">663 of 9296 words</span>
      <svg viewBox="0 0 15 14" className="mr-4 h-[14px] w-[15px]" fill="none" stroke="#666"><path d="M7.500 2v11M7.500 2Q4 0 .5 1.500v11Q4 11 7.500 13M7.500 2Q9 .5 14 1M9 5l5 6M14 5 9 11" /></svg>
      <span className="flex-1">English (United States)</span>
      <svg viewBox="0 0 16 15" className="mr-[2px] h-[15px] w-4" fill="#444"><path d="M0 0h15v8H8l-1 4H0z" /><circle cx="11" cy="10.500" r="3" fill="none" stroke="#444" strokeWidth="2" strokeDasharray="2 1" /></svg>
      <button className="mr-5">Display Settings</button>
      <button aria-label="Read mode" className="mr-[14px]"><svg viewBox="0 0 15 14" className="h-[14px] w-[15px]" fill="none" stroke="#666"><path d="M7.500 2v12M7.500 2Q4 0 .5 1v11Q4 11 7.500 13 11 11 14.500 12V1Q11 0 7.500 2M2 4h4M2 6.500h4M2 9h4M9 4h4M9 6.500h4M9 9h4" /></svg></button>
      <button aria-label="Print layout" className="mr-3 flex h-full w-10 items-center justify-center bg-[#c6c6c6]"><svg viewBox="0 0 14 14" className="h-[14px] w-[14px]" fill="#e8e8e8" stroke="#555"><path d="M.5.5h13v13H.5zM3 3.500h8M3 5.500h8M3 7.500h8M3 9.500h8M3 11.500h8" /></svg></button>
      <button aria-label="Web layout" className="mr-4"><svg viewBox="0 0 15 14" className="h-[14px] w-[15px]" fill="none" stroke="#666"><path d="M6 12.500H.5V.5h12V6M3 3.500h7M3 6h5M3 8.500h3" /><circle cx="10.500" cy="10" r="3.500" fill="#8a8a8a" /></svg></button>
      <span className="w-4 text-sm">−</span>
      <input
        aria-label="Document zoom"
        type="range"
        defaultValue={50}
        className="h-px w-[100px] appearance-none bg-[#8a8a8a] [&::-webkit-slider-thumb]:h-[11px] [&::-webkit-slider-thumb]:w-[5px] [&::-webkit-slider-thumb]:appearance-none [&::-webkit-slider-thumb]:bg-[#666]"
      />
      <span className="ml-1 w-[22px] text-sm">+</span>
      <span className="w-[46px]">100%</span>
    </div>
  </section>
);

const RightTaskbar = () => (
  <footer className={`flex h-10 shrink-0 items-stretch text-white ${taskbarBg}`}>
    <button aria-label="Start" className="flex w-12 items-center justify-center"><WindowsLogo className="h-4 w-4" /></button>
    <button aria-label="Search" className="flex w-12 items-center justify-center"><SearchGlyph className="h-4 w-4" /></button>
    <button aria-label="Cortana" className="flex w-12 items-center justify-center"><CortanaRing className="h-4 w-4" /></button>
    <button aria-label="Task View" className="flex w-12 items-center justify-center"><TaskViewGlyph className="h-4 w-4" /></button>
    {apps.map(({ name, Icon }) => (
      <button key={name} aria-label={name} className={`flex w-[49px] flex-col items-center ${name === "Blup" ? "bg-[#4a4e51]" : ""}`}>
        <span className="flex flex-1 items-center"><span className="h-6 w-6"><Icon /></span></span>
        <span className={`h-0.5 bg-[#76b9ed] ${name === "Blup" ? "w-full" : "w-10"}`} />
      </button>
    ))}
    <div className="flex flex-1 flex-col items-end justify-center pr-[5px]">
      <div className="w-[60px] text-center text-[11px] leading-[18px]">
        <div>07:54 AM</div>
        <div>21-08-2021</div>
      </div>
    </div>
  </footer>
);

export default function App() {
  return (
    <div className="flex h-screen overflow-hidden bg-[#222] font-['Open_Sans',sans-serif]">
      <div className="flex min-w-0 flex-1 flex-col">
        <BlupWindow />
        <LeftTaskbar />
      </div>
      <div className="flex min-w-0 flex-1 flex-col">
        <div className="flex h-px bg-[#4a4a4a] pl-[230px]"><span className="w-[95px] bg-[#8c8c52]" /></div>
        <div className="flex min-h-0 flex-1">
          <ExplorerEdge />
          <NotepadWindow />
          <WordWindow />
        </div>
        <RightTaskbar />
      </div>
    </div>
  );
}
